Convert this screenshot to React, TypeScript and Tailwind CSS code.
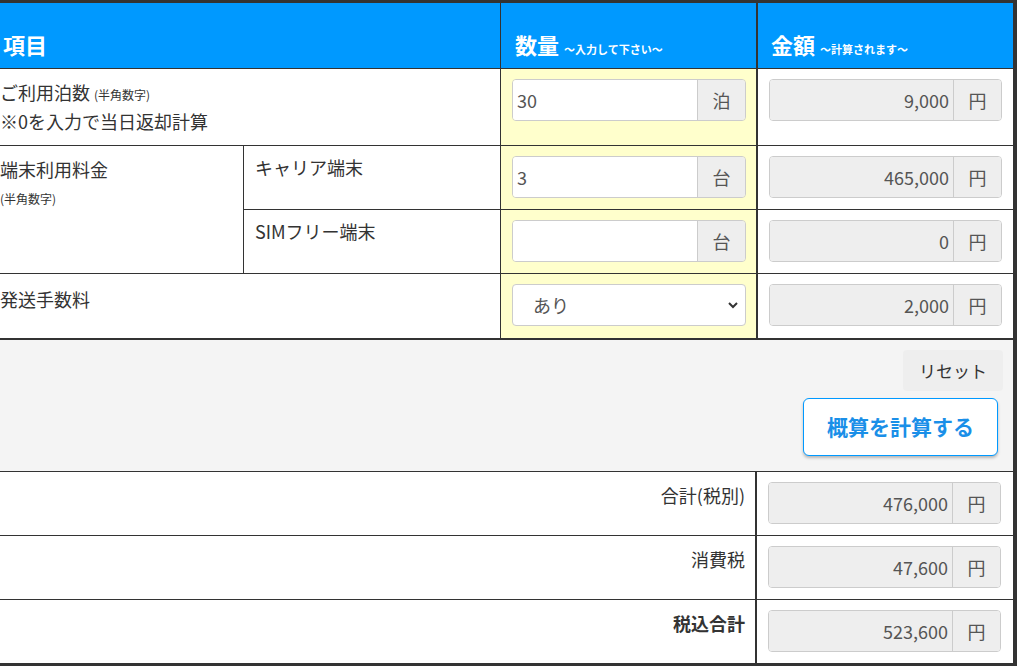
const font = { fontFamily: '"Noto Sans CJK JP", "Noto Sans", sans-serif' };

function QtyInput({ value, unit }: { value: string; unit: string }) {
  return (
    <div className="flex h-[42px] w-[234px] rounded border border-[#ccc] overflow-hidden">
      <div className="flex-1 bg-white px-[4px] flex items-center text-[18px] text-[#555]">{value}</div>
      <div className="w-[48px] bg-[#eee] border-l border-[#ccc] flex items-center justify-center text-[18px] text-[#555]">{unit}</div>
    </div>
  );
}

function Amount({ value }: { value: string }) {
  return (
    <div className="flex h-[42px] w-[233px] rounded border border-[#ccc] overflow-hidden">
      <div className="flex-1 bg-[#eee] pr-[4px] flex items-center justify-end text-[18px] text-[#555]">{value}</div>
      <div className="w-[48px] bg-[#eee] border-l border-[#ccc] flex items-center justify-center text-[18px] text-[#555]">円</div>
    </div>
  );
}

function TotalRow({ label, value, bold }: { label: string; value: string; bold?: boolean }) {
  return (
    <div className="grid grid-cols-[757px_1fr] border-t border-[#333] h-[64px]">
      <div className={`border-r-2 border-[#333] text-right pr-[10px] pt-[10px] text-[18px] text-[#333] ${bold ? 'font-bold' : ''}`}>{label}</div>
      <div className="pl-[11px] pt-[10px]"><Amount value={value} /></div>
    </div>
  );
}

export default function App() {
  return (
    <div className="w-[1034px] h-[670px] bg-white" style={font}>
      <div className="w-[1017px] border-t-[3px] border-r-[4px] border-b-[3px] border-[#333] bg-white">
        <div className="grid grid-cols-[501px_257px_1fr] h-[66px] bg-[#0099ff] text-white font-bold border-b border-[#333]">
          <div className="pl-[3px] pt-[25px] text-[22px] border-r border-[#333]">項目</div>
          <div className="pl-[14px] pt-[25px] text-[22px] border-r-2 border-[#333]">数量 <span className="text-[11px]">～入力して下さい～</span></div>
          <div className="pl-[13px] pt-[25px] text-[22px]">金額 <span className="text-[11px]">～計算されます～</span></div>
        </div>

        <div className="grid grid-cols-[244px_257px_257px_1fr] text-[18px] text-[#333]">
          <div className="col-span-2 h-[77px] border-r border-b border-[#333] pt-[10px] leading-[27px]">
            ご利用泊数 <span className="text-[12px]">(半角数字)</span><br />※0を入力で当日返却計算
          </div>
          <div className="bg-[#ffffcc] border-r-2 border-b border-[#333] pl-[11px] pt-[10px]"><QtyInput value="30" unit="泊" /></div>
          <div className="border-b border-[#333] pl-[11px] pt-[10px]"><Amount value="9,000" /></div>

          <div className="row-span-2 border-r border-b border-[#333] pt-[10px] leading-[27px]">
            端末利用料金<br /><span className="text-[12px]">(半角数字)</span>
          </div>
          <div className="h-[64px] border-r border-b border-[#333] pl-[11px] pt-[8px]">キャリア端末</div>
          <div className="bg-[#ffffcc] border-r-2 border-b border-[#333] pl-[11px] pt-[10px]"><QtyInput value="3" unit="台" /></div>
          <div className="border-b border-[#333] pl-[11px] pt-[10px]"><Amount value="465,000" /></div>

          <div className="h-[64px] border-r border-b border-[#333] pl-[11px] pt-[8px]">SIMフリー端末</div>
          <div className="bg-[#ffffcc] border-r-2 border-b border-[#333] pl-[11px] pt-[10px]"><QtyInput value="" unit="台" /></div>
          <div className="border-b border-[#333] pl-[11px] pt-[10px]"><Amount value="0" /></div>

          <div className="col-span-2 h-[64px] border-r border-[#333] pt-[12px]">発送手数料</div>
          <div className="bg-[#ffffcc] border-r-2 border-[#333] pl-[11px] pt-[10px]">
            <div className="flex h-[42px] w-[234px] rounded border border-[#ccc] bg-white items-center pl-[20px] pr-[6px] text-[18px] text-[#555]">
              <span className="flex-1">あり</span>
              <svg width="12" height="12" viewBox="0 0 12 12"><path d="M2 4l4 4 4-4" stroke="#333" strokeWidth="2" fill="none" /></svg>
            </div>
          </div>
          <div className="pl-[11px] pt-[10px]"><Amount value="2,000" /></div>
        </div>

        <div className="bg-[#f4f4f4] border-t-2 border-[#333] h-[133px] flex flex-col items-end pr-[10px] pt-[10px] gap-[7px]">
          <div className="h-[41px] w-[100px] rounded bg-[#eee] flex items-center justify-center text-[17px] text-[#333]">リセット</div>
          <div className="h-[58px] w-[195px] mr-[5px] rounded-md border border-[#0099ff] bg-white shadow-[0_2px_3px_rgba(0,0,0,0.25)] flex items-center justify-center text-[21px] font-bold text-[#1a8fe8]">概算を計算する</div>
        </div>

        <TotalRow label="合計(税別)" value="476,000" />
        <TotalRow label="消費税" value="47,600" />
        <TotalRow label="税込合計" value="523,600" bold />
      </div>
    </div>
  );
}
